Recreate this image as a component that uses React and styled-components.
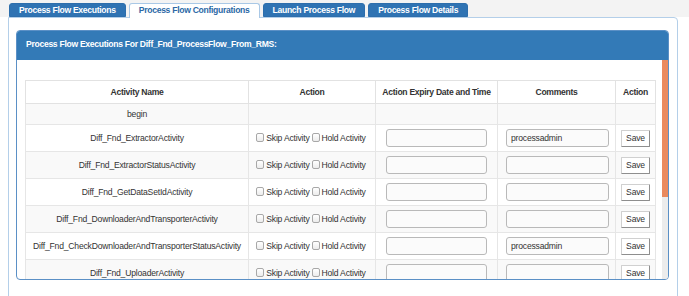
import React from "react";
import styled, { createGlobalStyle } from "styled-components";

const GlobalStyle = createGlobalStyle`
  html, body {
    margin: 0;
    padding: 0;
    background: #ffffff;
    overflow: hidden;
  }
  body {
    font-family: "Liberation Sans", Arial, sans-serif;
    color: #333333;
  }
`;

const tabs = [
  "Process Flow Executions",
  "Process Flow Configurations",
  "Launch Process Flow",
  "Process Flow Details",
];

const activities = [
  { name: "Diff_Fnd_ExtractorActivity", comment: "processadmin" },
  { name: "Diff_Fnd_ExtractorStatusActivity", comment: "" },
  { name: "Diff_Fnd_GetDataSetIdActivity", comment: "" },
  { name: "Diff_Fnd_DownloaderAndTransporterActivity", comment: "" },
  { name: "Diff_Fnd_CheckDownloaderAndTransporterStatusActivity", comment: "processadmin" },
  { name: "Diff_Fnd_UploaderActivity", comment: "" },
];

const App = () => {
  return (
    <>
      <GlobalStyle />
      <Page>
        <TabNav>
          {tabs.map((t, i) => (
            <Tab key={t} active={i === 1}>
              {t}
            </Tab>
          ))}
        </TabNav>
        <TabPanel>
          <Card>
            <CardHeader>Process Flow Executions For Diff_Fnd_ProcessFlow_From_RMS:</CardHeader>
            <CardBody>
              <ScrollArea>
                <Table>
                  <colgroup>
                    <col style={{ width: 223 }} />
                    <col style={{ width: 127 }} />
                    <col style={{ width: 122 }} />
                    <col style={{ width: 118 }} />
                    <col />
                  </colgroup>
                  <thead>
                    <tr>
                      <Th>Activity Name</Th>
                      <Th>Action</Th>
                      <Th>Action Expiry Date and Time</Th>
                      <Th>Comments</Th>
                      <Th>Action</Th>
                    </tr>
                  </thead>
                  <tbody>
                    <Row>
                      <Td>begin</Td>
                      <Td />
                      <Td />
                      <Td />
                      <Td />
                    </Row>
                    {activities.map((a) => (
                      <Row key={a.name}>
                        <Td>{a.name}</Td>
                        <Td>
                          <Check type="checkbox" />
                          <CheckLabel>Skip Activity</CheckLabel>
                          <Check type="checkbox" />
                          <CheckLabel>Hold Activity</CheckLabel>
                        </Td>
                        <InputCell left={10} right={10}>
                          <TextInput type="text" defaultValue="" />
                        </InputCell>
                        <InputCell left={8} right={6}>
                          <TextInput type="text" defaultValue={a.comment} />
                        </InputCell>
                        <Td>
                          <SaveButton>Save</SaveButton>
                        </Td>
                      </Row>
                    ))}
                  </tbody>
                </Table>
              </ScrollArea>
              <ScrollTrack>
                <ScrollThumb />
              </ScrollTrack>
            </CardBody>
          </Card>
        </TabPanel>
      </Page>
    </>
  );
};

const Page = styled.div`
  width: 689px;
  height: 296px;
  overflow: hidden;
`;

const TabNav = styled.div`
  display: flex;
  align-items: flex-end;
  gap: 3px;
  height: 17px;
  padding: 3px 0 0 9px;
  box-sizing: border-box;
  background: #f3f3f3;
`;

const Tab = styled.div`
  position: relative;
  z-index: 1;
  height: ${(p) => (p.active ? "15px" : "14px")};
  margin-bottom: ${(p) => (p.active ? "-1px" : "0")};
  padding: 0 9px;
  box-sizing: border-box;
  line-height: 13px;
  font-size: 8.6px;
  letter-spacing: -0.3px;
  font-weight: bold;
  border-radius: 3px 3px 0 0;
  border: 1px solid ${(p) => (p.active ? "#a9c8e6" : "#2d6eac")};
  border-bottom: ${(p) => (p.active ? "none" : "1px solid #2d6eac")};
  background: ${(p) => (p.active ? "#ffffff" : "#2f73b3")};
  color: ${(p) => (p.active ? "#2b68a6" : "#ffffff")};
  white-space: nowrap;
`;

const TabPanel = styled.div`
  margin-left: 8px;
  width: 670px;
  height: 300px;
  box-sizing: border-box;
  border: 1px solid #b4cfe9;
  border-radius: 0 4px 0 0;
  padding: 12px 8px 0 7px;
  background: #ffffff;
`;

const Card = styled.div`
  display: flex;
  flex-direction: column;
  height: 250px;
  box-sizing: border-box;
  border: 1px solid #5b90c6;
  border-radius: 4px;
  overflow: hidden;
`;

const CardHeader = styled.div`
  flex: 0 0 29px;
  display: flex;
  align-items: center;
  padding: 0 0 3px 9px;
  box-sizing: border-box;
  background: #337ab7;
  color: #ffffff;
  font-size: 8.6px;
  letter-spacing: -0.3px;
  font-weight: bold;
  white-space: nowrap;
`;

const CardBody = styled.div`
  flex: 1;
  display: flex;
  min-height: 0;
`;

const ScrollArea = styled.div`
  flex: 1;
  overflow: hidden;
  padding: 20px 6px 0 8px;
`;

const ScrollTrack = styled.div`
  flex: 0 0 6px;
  background: #ececec;
`;

const ScrollThumb = styled.div`
  height: 137px;
  background: #ea8a5e;
`;

const Table = styled.table`
  width: 631px;
  border-collapse: collapse;
  table-layout: fixed;
  font-size: 8.6px;
  letter-spacing: -0.2px;
  color: #333333;
`;

const Th = styled.th`
  border: 1px solid #e2e2e2;
  padding: 5px 1px;
  line-height: 12px;
  font-weight: bold;
  letter-spacing: -0.3px;
  text-align: center;
  white-space: nowrap;
  background: #ffffff;
`;

const Row = styled.tr`
  &:nth-of-type(odd) {
    background: #f9f9f9;
  }
`;

const Td = styled.td`
  border: 1px solid #e6e6e6;
  padding: 4px 1px;
  line-height: 12px;
  text-align: center;
  white-space: nowrap;
  overflow: hidden;
`;

const InputCell = styled(Td)`
  padding: 4px ${(p) => p.right}px 4px ${(p) => p.left}px;
`;

const TextInput = styled.input`
  display: block;
  width: 100%;
  height: 18px;
  box-sizing: border-box;
  border: 1px solid #b9b9b9;
  border-radius: 3px;
  background: #fbfbfb;
  padding: 0 4px;
  font-family: inherit;
  font-size: 8.6px;
  letter-spacing: -0.2px;
  color: #333333;
  outline: none;
`;

const Check = styled.input`
  appearance: none;
  width: 8px;
  height: 9px;
  margin: 0 2px 0 0;
  border: 1px solid #a8a8a8;
  border-radius: 2px;
  background: linear-gradient(#ffffff, #ececec);
  vertical-align: -1px;
`;

const CheckLabel = styled.span`
  margin-right: 2px;
`;

const SaveButton = styled.button`
  height: 17px;
  padding: 0 4px;
  background: #ffffff;
  border: 1px solid #d0d0d0;
  border-right-color: #8e8e8e;
  border-bottom-color: #8e8e8e;
  border-radius: 1px;
  font-family: inherit;
  font-size: 8.6px;
  letter-spacing: -0.2px;
  color: #333333;
  line-height: 15px;
`;

export default App;
